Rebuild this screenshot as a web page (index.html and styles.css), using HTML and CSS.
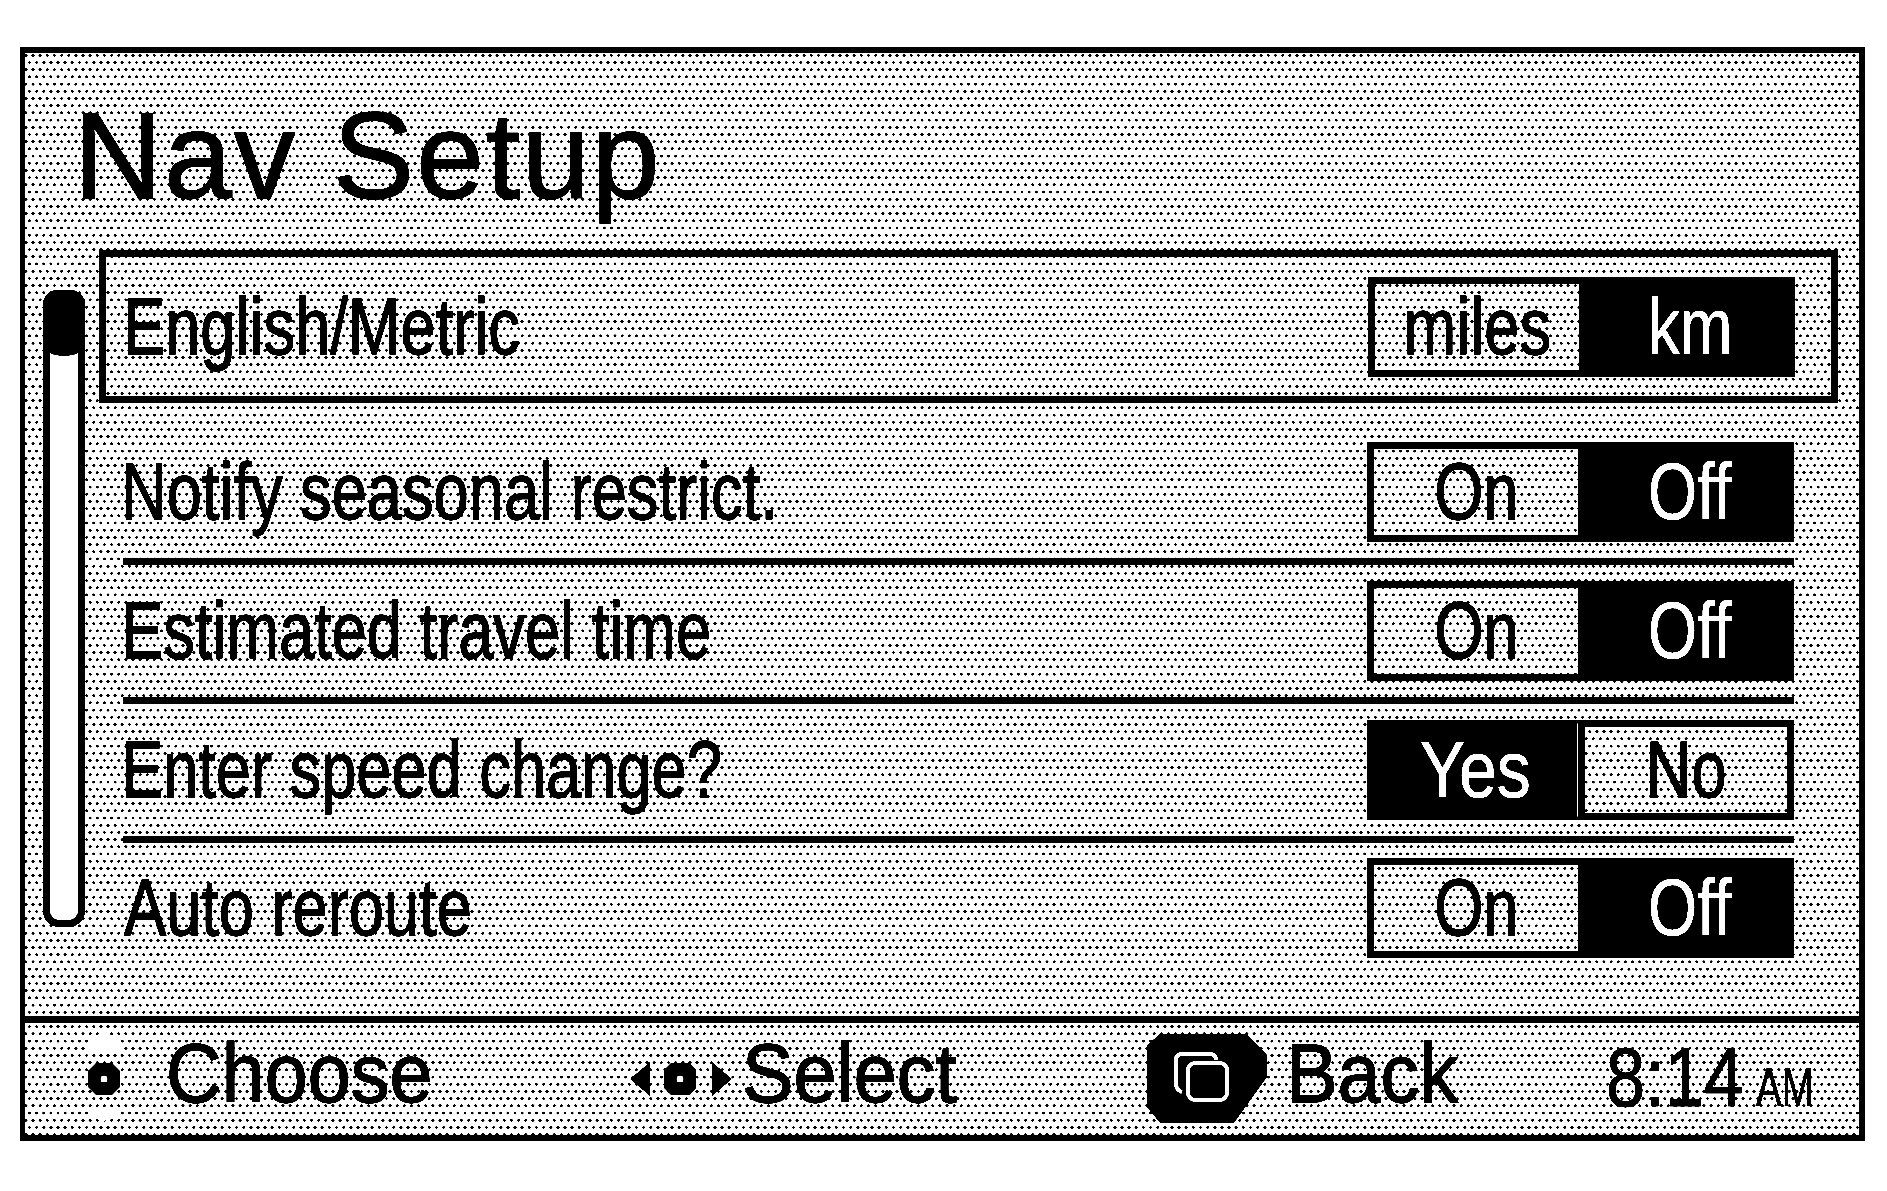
FILE: index.html
```html
<!DOCTYPE html>
<html lang="en">
<head>
    <meta charset="UTF-8">
    <title>Nav Setup</title>
    <link rel="stylesheet" href="styles.css">
</head>
<body>
    <div class="screen">
        <h1 class="title">Nav Setup</h1>
        <div class="content">
            <div class="scrollbar"><div class="scroll-thumb"></div></div>
            <div class="rows">
                <div class="row row-selected">
                    <span class="label">English/Metric</span>
                    <div class="toggle">
                        <div class="seg"><span>miles</span></div>
                        <div class="seg active"><span>km</span></div>
                    </div>
                </div>
                <div class="row row-lined">
                    <span class="label">Notify seasonal restrict.</span>
                    <div class="toggle">
                        <div class="seg"><span>On</span></div>
                        <div class="seg active"><span>Off</span></div>
                    </div>
                </div>
                <div class="row row-lined">
                    <span class="label">Estimated travel time</span>
                    <div class="toggle">
                        <div class="seg"><span>On</span></div>
                        <div class="seg active"><span>Off</span></div>
                    </div>
                </div>
                <div class="row row-lined">
                    <span class="label">Enter speed change?</span>
                    <div class="toggle toggle-first">
                        <div class="seg active"><span>Yes</span></div>
                        <div class="seg"><span>No</span></div>
                    </div>
                </div>
                <div class="row row-last">
                    <span class="label">Auto reroute</span>
                    <div class="toggle">
                        <div class="seg"><span>On</span></div>
                        <div class="seg active"><span>Off</span></div>
                    </div>
                </div>
            </div>
        </div>
        <div class="footer">
            <div class="foot-item">
                <svg class="icon-choose" width="42" height="96" viewBox="0 0 42 96">
                    <path d="M21 1 L36 10 L38 19 L5 19 L7 10 Z" fill="#fff"/>
                    <path d="M21 90 L34 84 L37 76 L5 76 L8 84 Z" fill="#fff"/>
                    <path d="M13 32 H29 L37 40 V56 L29 64 H13 L5 56 V40 Z" fill="#000"/>
                    <circle cx="21" cy="48" r="3.5" fill="#fff"/>
                </svg>
                <span class="foot-text">Choose</span>
            </div>
            <div class="foot-item">
                <svg class="icon-select" width="102" height="36" viewBox="0 0 102 36">
                    <path d="M20 1 V35 L0 18 Z" fill="#000"/>
                    <path d="M82 1 V35 L102 18 Z" fill="#000"/>
                    <path d="M41 2 H60 L66 9 V27 L60 34 H41 L34 27 V9 Z" fill="#000"/>
                    <circle cx="50" cy="18" r="3.5" fill="#fff"/>
                </svg>
                <span class="foot-text">Select</span>
            </div>
            <div class="foot-item">
                <svg class="icon-back" width="120" height="90" viewBox="0 0 120 90">
                    <path d="M0 11 L13 0 H100 L120 21 V43 L87 89 H13 L0 73 Z" fill="#000"/>
                    <path d="M29 52 V26 Q29 20 35 20 H62 Q69 20 69 26" fill="none" stroke="#fff" stroke-width="4"/>
                    <path d="M29 50 Q29 56 35 58" fill="none" stroke="#fff" stroke-width="4"/>
                    <rect x="41" y="29" width="39" height="37" rx="7" fill="none" stroke="#fff" stroke-width="4"/>
                </svg>
                <span class="foot-text">Back</span>
            </div>
            <div class="clock">
                <span class="clock-time">8:14</span>
                <span class="clock-ampm">AM</span>
            </div>
        </div>
    </div>
</body>
</html>
```

FILE: styles.css
```css
html, body {
    margin: 0;
    background: #fff;
}
body {
    padding: 47px 0 0 20px;
    font-family: "Liberation Sans", Arial, sans-serif;
    color: #000;
}
.screen {
    box-sizing: border-box;
    width: 1845px;
    height: 1094px;
    border: 6px solid #000;
    border-left-width: 5px;
    display: flex;
    flex-direction: column;
    background-color: #fff;
    background-image:
        radial-gradient(1.9px 1.3px at 50% 50%, #000 85%, transparent 100%),
        radial-gradient(1.9px 1.3px at 50% 50%, #000 85%, transparent 100%);
    background-size: 7.15px 14.4px;
    background-position: -2.7px -4.9px, 0.9px 2.3px;
    filter: contrast(6);
}
.title {
    margin: 42px 0 33px 49px;
    font-size: 122px;
    font-weight: normal;
    line-height: 1;
    letter-spacing: 2px;
    -webkit-text-stroke: 1.4px #000;
}
.content {
    flex: 1;
    display: flex;
    align-items: flex-start;
    padding-left: 18px;
}
.scrollbar {
    box-sizing: border-box;
    width: 42px;
    height: 637px;
    margin-top: 40px;
    background: #fff;
    border: 7px solid #000;
    border-radius: 14px 14px 16px 16px;
}
.scroll-thumb {
    height: 60px;
    margin: -1px;
    background: #000;
    border-radius: 10px 10px 50% 50% / 10px 10px 5px 5px;
}
.rows {
    width: 1739px;
    margin-left: 14px;
}
.row {
    display: flex;
    align-items: center;
    justify-content: space-between;
    margin: 0 44px 0 24px;
    padding: 16px 0;
}
.row-selected {
    box-sizing: border-box;
    height: 153px;
    margin: 0 0 23px 0;
    padding: 20px 36px 20px 18px;
    border: 7px solid #000;
}
.row-lined {
    border-bottom: 7px solid #000;
}
.row-last {
    padding-top: 15px;
}
.label {
    display: inline-block;
    margin-left: -2px;
    font-size: 80px;
    line-height: 80px;
    white-space: nowrap;
    transform: scaleX(0.79);
    transform-origin: left center;
    -webkit-text-stroke: 1.4px #000;
}
.row-selected .label {
    margin-left: -1px;
}
.row-last .label {
    margin-left: 1px;
}
.toggle {
    display: grid;
    grid-template-columns: 211px 216px;
    width: 427px;
    height: 100px;
    flex: none;
}
.seg {
    box-sizing: border-box;
    display: flex;
    align-items: center;
    justify-content: center;
    border: 7px solid #000;
    border-right: 0;
    font-size: 80px;
    line-height: 80px;
}
.seg span {
    display: inline-block;
    transform: scaleX(0.79);
    -webkit-text-stroke: 1.4px #000;
}
.seg.active {
    background: #000;
    color: #fff;
}
.seg.active span {
    -webkit-text-stroke: 0.5px #fff;
}
.toggle-first .seg.active {
    border-right: 1px solid #fff;
}
.toggle-first .seg.active span {
    transform: scaleX(0.85);
}
.toggle-first .seg:last-child {
    border-right: 7px solid #000;
}
.footer {
    box-sizing: border-box;
    height: 119px;
    border-top: 7px solid #000;
    padding-left: 58px;
    display: grid;
    grid-template-columns: 547px 517px 457px 1fr;
    align-items: center;
}
.foot-item {
    display: flex;
    align-items: center;
}
.foot-text {
    display: inline-block;
    margin-bottom: 12px;
    font-size: 84px;
    line-height: 84px;
    white-space: nowrap;
    transform: scaleX(0.92);
    transform-origin: left center;
    -webkit-text-stroke: 1.4px #000;
}
.icon-choose {
    margin-right: 41px;
    flex: none;
}
.icon-select {
    margin-right: 10px;
    flex: none;
}
.icon-back {
    margin-right: 19px;
    flex: none;
}
.clock {
    display: flex;
    align-items: baseline;
    margin: 0 0 5px 2px;
    white-space: nowrap;
}
.clock-time {
    display: inline-block;
    width: 150px;
    font-size: 84px;
    line-height: 84px;
    transform: scaleX(0.84);
    transform-origin: left center;
    -webkit-text-stroke: 1px #000;
}
.clock-ampm {
    display: inline-block;
    font-size: 55px;
    transform: scaleX(0.7);
    transform-origin: left center;
    -webkit-text-stroke: 0.6px #000;
}
```
